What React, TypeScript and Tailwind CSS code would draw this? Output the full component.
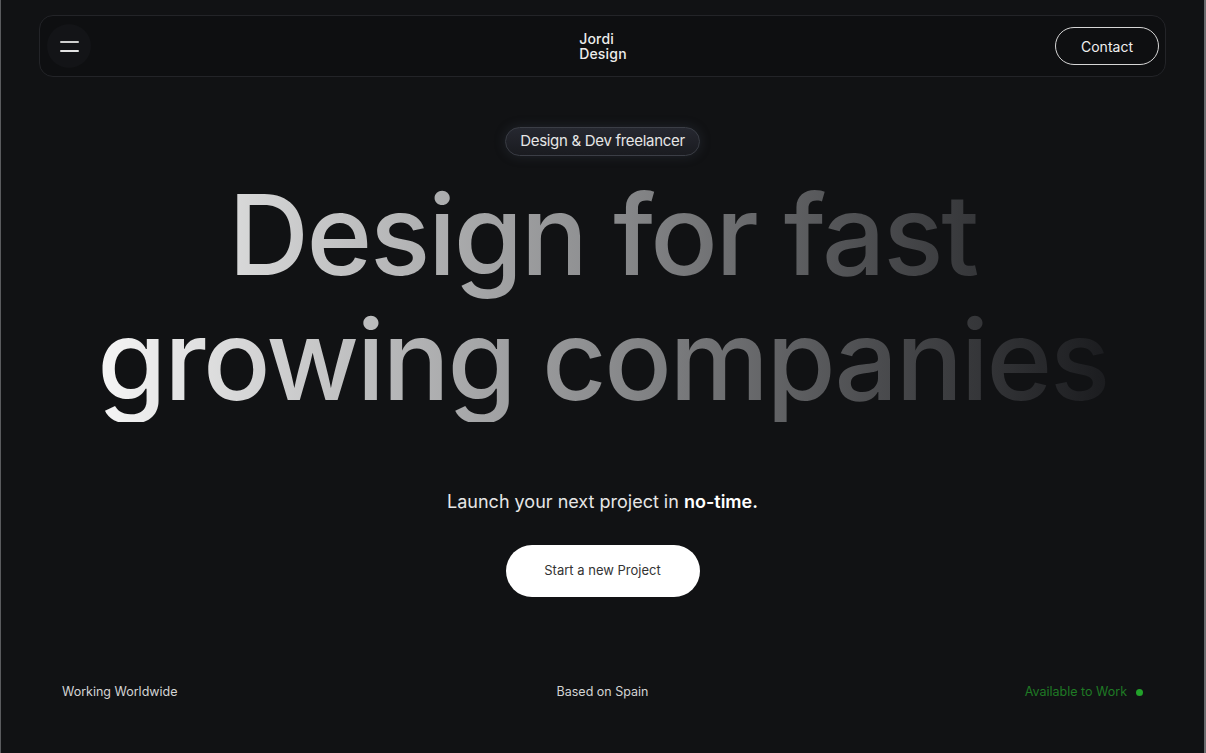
import React from "react";

export default function App() {
  return (
    <div
      className="min-h-[753px] w-full bg-[#111214] border-l border-r-2 border-l-[#5a5b5e] border-r-[#6a6b6e] flex flex-col text-white"
      style={{ fontFamily: "Inter, 'Noto Sans', sans-serif" }}
    >
      {/* Nav */}
      <div className="mx-[38px] mt-[15px] h-[62px] rounded-[14px] border border-[#232428] bg-[#0e0f11] grid grid-cols-[1fr_auto_1fr] items-center pl-[7px] pr-[6px]">
        <div className="flex">
          <button className="w-[44px] h-[44px] rounded-full bg-[#131417] flex flex-col items-center justify-center gap-[7px]">
            <span className="block w-[19px] h-[2px] bg-[#cfcfcf] rounded" />
            <span className="block w-[19px] h-[2px] bg-[#e4e4e4] rounded" />
          </button>
        </div>
        <div className="text-[14px] leading-[15px] font-medium text-[#ececec] tracking-[0.2px]">
          <div>Jordi</div>
          <div>Design</div>
        </div>
        <div className="flex justify-end">
          <button className="h-[38px] w-[104px] rounded-full border border-[#d6d6d6] text-[14px] text-[#f0f0f0]">
            Contact
          </button>
        </div>
      </div>

      {/* Hero */}
      <div className="flex flex-col items-center">
        <div className="mt-[50px] h-[29px] px-[14px] rounded-full border border-[#3b3e46] bg-gradient-to-b from-[#262830] to-[#1a1b20] flex items-center text-[15px] tracking-[-0.3px] text-[#e6e6e6] shadow-[0_0_12px_rgba(80,90,110,0.25)]">
          Design &amp; Dev freelancer
        </div>
        <h1 className="mt-[16px] text-center text-[112px] leading-[125px] font-medium tracking-[-2.4px] bg-gradient-to-r from-[#f6f6f6] via-[#8c8d8f] via-50% to-[#1b1c1f] bg-clip-text text-transparent">
          Design for fast
          <br />
          growing companies
        </h1>
        <p className="mt-[66px] text-[18px] leading-[28px] text-[#e6e6e6]">
          Launch your next project in <span className="font-semibold text-white">no-time.</span>
        </p>
        <button className="mt-[29px] h-[52px] w-[194px] rounded-full bg-white text-[13px] text-[#333]">
          Start a new Project
        </button>
      </div>

      {/* Footer */}
      <div className="mt-[85px] px-[61px] grid grid-cols-3 items-center text-[12.5px] leading-[20px]">
        <span className="text-[#d4d4d4]">Working Worldwide</span>
        <span className="text-[#d4d4d4] text-center">Based on Spain</span>
        <span className="flex items-center justify-end gap-[9px] text-[#1f7a24]">
          Available to Work
          <span className="block w-[7px] h-[7px] rounded-full bg-[#22a22a]" />
        </span>
      </div>
    </div>
  );
}
